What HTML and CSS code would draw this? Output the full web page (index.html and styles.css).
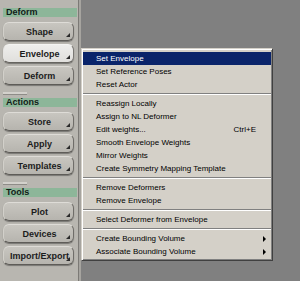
FILE: index.html
```html
<!DOCTYPE html>
<html lang="en">
<head>
  <meta charset="UTF-8" />
  <title>Deform Envelope Menu</title>
  <link rel="stylesheet" href="styles.css">
</head>
<body>
  <div class="screen">
    <aside class="panel">
      <div class="section-head">Deform</div>
      <div class="tool">Shape</div>
      <div class="tool on">Envelope</div>
      <div class="tool">Deform</div>
      <div class="divider"></div>

      <div class="section-head">Actions</div>
      <div class="tool">Store</div>
      <div class="tool">Apply</div>
      <div class="tool">Templates</div>
      <div class="divider"></div>

      <div class="section-head">Tools</div>
      <div class="tool">Plot</div>
      <div class="tool">Devices</div>
      <div class="tool">Import/Export</div>
    </aside>

    <main class="workspace">
      <div class="menu">
        <div class="menu-item active">Set Envelope</div>
        <div class="menu-item">Set Reference Poses</div>
        <div class="menu-item">Reset Actor</div>
        <div class="menu-sep"></div>
        <div class="menu-item">Reassign Locally</div>
        <div class="menu-item">Assign to NL Deformer</div>
        <div class="menu-item">Edit weights...<span class="shortcut">Ctrl+E</span></div>
        <div class="menu-item">Smooth Envelope Weights</div>
        <div class="menu-item">Mirror Weights</div>
        <div class="menu-item">Create Symmetry Mapping Template</div>
        <div class="menu-sep"></div>
        <div class="menu-item">Remove Deformers</div>
        <div class="menu-item">Remove Envelope</div>
        <div class="menu-sep"></div>
        <div class="menu-item">Select Deformer from Envelope</div>
        <div class="menu-sep"></div>
        <div class="menu-item sub">Create Bounding Volume</div>
        <div class="menu-item sub">Associate Bounding Volume</div>
      </div>
    </main>
  </div>
</body>
</html>
```

FILE: styles.css
```css
body {
  margin: 0;
  font-family: "Liberation Sans", Arial, sans-serif;
  background: #808080;
}

.screen {
  display: flex;
  width: 300px;
  height: 281px;
  overflow: hidden;
}

/* left tool panel */
.panel {
  width: 79px;
  box-sizing: border-box;
  padding: 8px 0 0 3px;
  background: #b8b6b0;
  border-right: 1px solid #7c7a76;
  display: flex;
  flex-direction: column;
}

.section-head {
  width: 74px;
  height: 9px;
  box-sizing: border-box;
  padding-left: 3px;
  margin-bottom: 2px;
  background: #8db699;
  color: #102018;
  font-size: 9px;
  font-weight: bold;
  line-height: 9px;
}

.tool {
  position: relative;
  width: 71px;
  height: 19px;
  box-sizing: border-box;
  margin-top: 3px;
  padding-left: 2px;
  border: 1px solid;
  border-color: #dedcd7 #6f6d69 #5e5c58 #d2d0ca;
  border-radius: 6px;
  background: linear-gradient(#c8c6c0, #b6b4ae);
  box-shadow: 0 1px 1px rgba(0, 0, 0, 0.35);
  color: #1c1c1c;
  font-size: 9px;
  font-weight: bold;
  display: flex;
  align-items: center;
  justify-content: center;
}

.tool::after {
  content: "";
  position: absolute;
  right: 3px;
  bottom: 3px;
  width: 0;
  height: 0;
  border-left: 4px solid transparent;
  border-bottom: 4px solid #2a2a2a;
}

.tool.on {
  background: linear-gradient(#eeeeec, #e0dfdc);
  border-color: #f4f4f2 #7a7874 #66645f #e6e5e2;
}

.divider {
  width: 24px;
  height: 2px;
  margin: 7px 0 3px;
  background: #d3d1cc;
  border-bottom: 1px solid #8e8c88;
}

/* dark workspace + popup menu */
.workspace {
  flex: 1;
  position: relative;
  background: #808080;
  border-left: 2px solid #a6a49f;
}

.menu {
  position: absolute;
  left: 0;
  top: 48px;
  width: 192px;
  box-sizing: border-box;
  padding: 3px 0 2px;
  background: #d4d0c8;
  border: 1px solid;
  border-color: #d4d0c8 #404040 #404040 #d4d0c8;
  box-shadow: inset 1px 1px 0 #fff, inset -1px -1px 0 #808080;
  font-size: 8px;
  color: #000;
}

.menu-item {
  position: relative;
  height: 13px;
  line-height: 13px;
  margin: 0 1px;
  padding-left: 13px;
  white-space: nowrap;
}

.menu-item.active {
  background: #0a246a;
  color: #fff;
}

.shortcut {
  position: absolute;
  right: 15px;
}

.menu-item.sub::after {
  content: "";
  position: absolute;
  right: 5px;
  top: 4px;
  border-left: 3px solid #000;
  border-top: 3px solid transparent;
  border-bottom: 3px solid transparent;
}

.menu-sep {
  height: 2px;
  margin: 2px 1px;
  border-top: 1px solid #808080;
  border-bottom: 1px solid #fff;
  box-sizing: border-box;
}
```
